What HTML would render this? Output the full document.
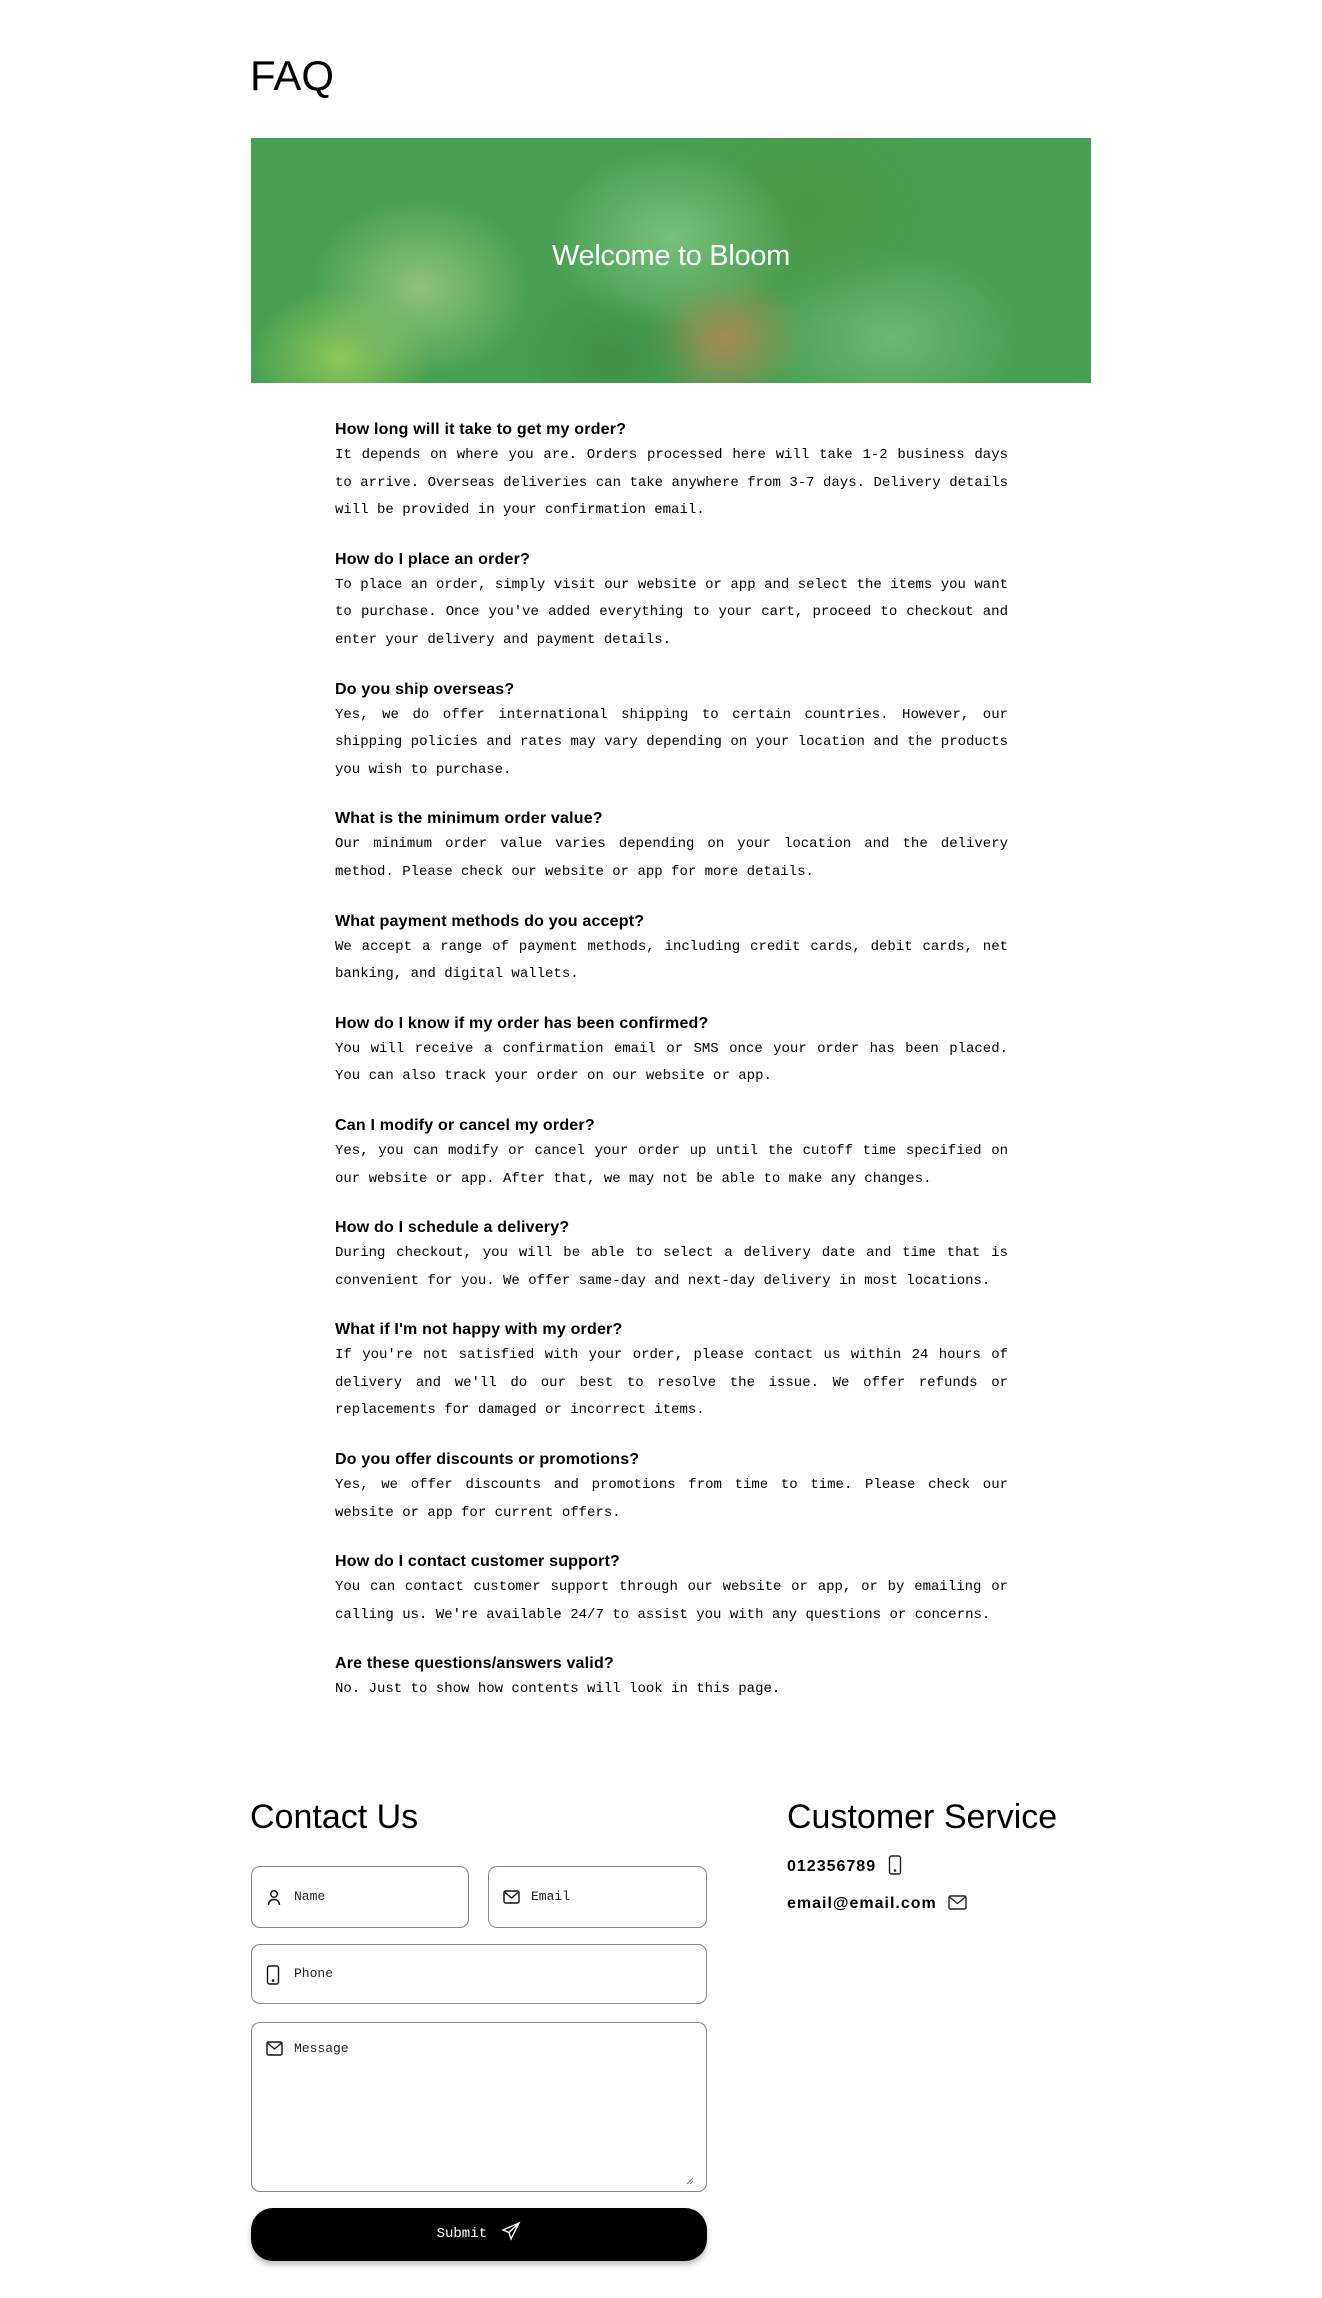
<!DOCTYPE html>
<html><head><meta charset="utf-8"><style>
*{margin:0;padding:0;box-sizing:border-box}
body{width:1322px;height:2298px;background:#fff;position:relative;font-family:"Liberation Sans",sans-serif;color:#000;overflow:hidden}
h1{position:absolute;left:250px;top:51px;font-size:42px;font-weight:normal;line-height:50px}
.banner{position:absolute;left:251px;top:138px;width:840px;height:245px;overflow:hidden;
background:
radial-gradient(ellipse 120px 90px at 420px 100px,#78c07c,transparent),
radial-gradient(ellipse 110px 90px at 170px 150px,#8fc27c,transparent),
radial-gradient(ellipse 90px 80px at 360px 220px,#3e8f45,transparent),
radial-gradient(ellipse 80px 70px at 475px 200px,#a68a55,transparent),
radial-gradient(ellipse 140px 110px at 560px 70px,#4c9a48,transparent),
radial-gradient(ellipse 130px 90px at 640px 200px,#6db674,transparent),
radial-gradient(ellipse 90px 70px at 90px 220px,#8fc75a,transparent),
#47a052}
.banner span{position:absolute;left:0;right:0;top:102px;text-align:center;color:#fff;font-size:29px;letter-spacing:-0.3px}
.faq{position:absolute;left:335px;top:418px;width:673px}
.q{margin-bottom:23px}
.q h3{font-size:16px;font-weight:bold;line-height:24px;letter-spacing:0.2px}
.q p{font-family:"Liberation Mono",monospace;font-size:14px;line-height:27.6px;text-align:justify}
h2{position:absolute;font-size:34px;font-weight:normal}
.box{position:absolute;border:1.5px solid #888;border-radius:9px;font-family:"Liberation Mono",monospace;font-size:13px;color:#222}
.box svg{position:absolute;left:14px}
.box span{position:absolute;left:42px}
.btn{position:absolute;left:251px;top:2208px;width:456px;height:53px;background:#000;border-radius:22px;box-shadow:0 4px 6px rgba(0,0,0,.25);color:#fff;font-family:"Liberation Mono",monospace;font-size:14px;text-align:center;line-height:53px}
.cs{position:absolute;left:787px;font-weight:bold;font-size:16px;letter-spacing:1px}
</style></head><body>
<h1>FAQ</h1>
<div class="banner"><span>Welcome to Bloom</span></div>
<div class="faq">
<div class="q"><h3>How long will it take to get my order?</h3><p>It depends on where you are. Orders processed here will take 1-2 business days to arrive. Overseas deliveries can take anywhere from 3-7 days. Delivery details will be provided in your confirmation email.</p></div>
<div class="q"><h3>How do I place an order?</h3><p>To place an order, simply visit our website or app and select the items you want to purchase. Once you've added everything to your cart, proceed to checkout and enter your delivery and payment details.</p></div>
<div class="q"><h3>Do you ship overseas?</h3><p>Yes, we do offer international shipping to certain countries. However, our shipping policies and rates may vary depending on your location and the products you wish to purchase.</p></div>
<div class="q"><h3>What is the minimum order value?</h3><p>Our minimum order value varies depending on your location and the delivery method. Please check our website or app for more details.</p></div>
<div class="q"><h3>What payment methods do you accept?</h3><p>We accept a range of payment methods, including credit cards, debit cards, net banking, and digital wallets.</p></div>
<div class="q"><h3>How do I know if my order has been confirmed?</h3><p>You will receive a confirmation email or SMS once your order has been placed. You can also track your order on our website or app.</p></div>
<div class="q"><h3>Can I modify or cancel my order?</h3><p>Yes, you can modify or cancel your order up until the cutoff time specified on our website or app. After that, we may not be able to make any changes.</p></div>
<div class="q"><h3>How do I schedule a delivery?</h3><p>During checkout, you will be able to select a delivery date and time that is convenient for you. We offer same-day and next-day delivery in most locations.</p></div>
<div class="q"><h3>What if I'm not happy with my order?</h3><p>If you're not satisfied with your order, please contact us within 24 hours of delivery and we'll do our best to resolve the issue. We offer refunds or replacements for damaged or incorrect items.</p></div>
<div class="q"><h3>Do you offer discounts or promotions?</h3><p>Yes, we offer discounts and promotions from time to time. Please check our website or app for current offers.</p></div>
<div class="q"><h3>How do I contact customer support?</h3><p>You can contact customer support through our website or app, or by emailing or calling us. We're available 24/7 to assist you with any questions or concerns.</p></div>
<div class="q"><h3>Are these questions/answers valid?</h3><p>No. Just to show how contents will look in this page.</p></div>
</div>

<h2 style="left:250px;top:1798px">Contact Us</h2>
<h2 style="left:787px;top:1798px">Customer Service</h2>

<div class="box" style="left:251px;top:1866px;width:218px;height:62px">
<svg style="top:22px" width="16" height="17" viewBox="0 0 16 17" fill="none" stroke="#111" stroke-width="1.4"><circle cx="8" cy="5" r="3.3"/><path d="M2.5 16c0-3.5 2.5-5.5 5.5-5.5s5.5 2 5.5 5.5"/></svg>
<span style="top:22px">Name</span></div>
<div class="box" style="left:488px;top:1866px;width:219px;height:62px">
<svg style="top:23px" width="17" height="14" viewBox="0 0 17 14" fill="none" stroke="#111" stroke-width="1.4"><rect x="1" y="1" width="15" height="12" rx="1.5"/><path d="M1.5 2l7 6 7-6"/></svg>
<span style="top:22px">Email</span></div>
<div class="box" style="left:251px;top:1944px;width:456px;height:60px">
<svg style="top:20px" width="14" height="20" viewBox="0 0 14 20" fill="none" stroke="#111" stroke-width="1.4"><rect x="1.5" y="1" width="11" height="18" rx="2"/><circle cx="7" cy="15.5" r=".6" fill="#111"/></svg>
<span style="top:21px">Phone</span></div>
<div class="box" style="left:251px;top:2022px;width:456px;height:170px">
<svg style="top:18px" width="17" height="15" viewBox="0 0 17 15" fill="none" stroke="#111" stroke-width="1.4"><rect x="1" y="1" width="15" height="13" rx="1.5"/><path d="M1.5 2l7 6 7-6"/></svg>
<span style="top:18px">Message</span>
<svg style="left:auto;right:12px;top:154px" width="8" height="8" viewBox="0 0 8 8" stroke="#777"><path d="M1 7L7 1M4 7L7 4"/></svg>
</div>
<div class="btn">Submit <svg style="vertical-align:-4px;margin-left:6px" width="20" height="20" viewBox="0 0 20 20" fill="none" stroke="#fff" stroke-width="1.4"><path d="M18 2L2 9l6 2.5L10 18z M8 11.5L18 2"/></svg></div>

<div class="cs" style="top:1855px">012356789 <svg style="vertical-align:-4px;margin-left:6px" width="14" height="20" viewBox="0 0 14 20" fill="none" stroke="#222" stroke-width="1.4"><rect x="1.5" y="1" width="11" height="18" rx="2"/><circle cx="7" cy="15.5" r=".6" fill="#222"/></svg></div>
<div class="cs" style="top:1895px">email@email.com <svg style="vertical-align:-2px;margin-left:6px" width="19" height="15" viewBox="0 0 19 15" fill="none" stroke="#222" stroke-width="1.4"><rect x="1" y="1" width="17" height="13" rx="1.5"/><path d="M1.5 2l8 6.5 8-6.5"/></svg></div>
</body></html>
